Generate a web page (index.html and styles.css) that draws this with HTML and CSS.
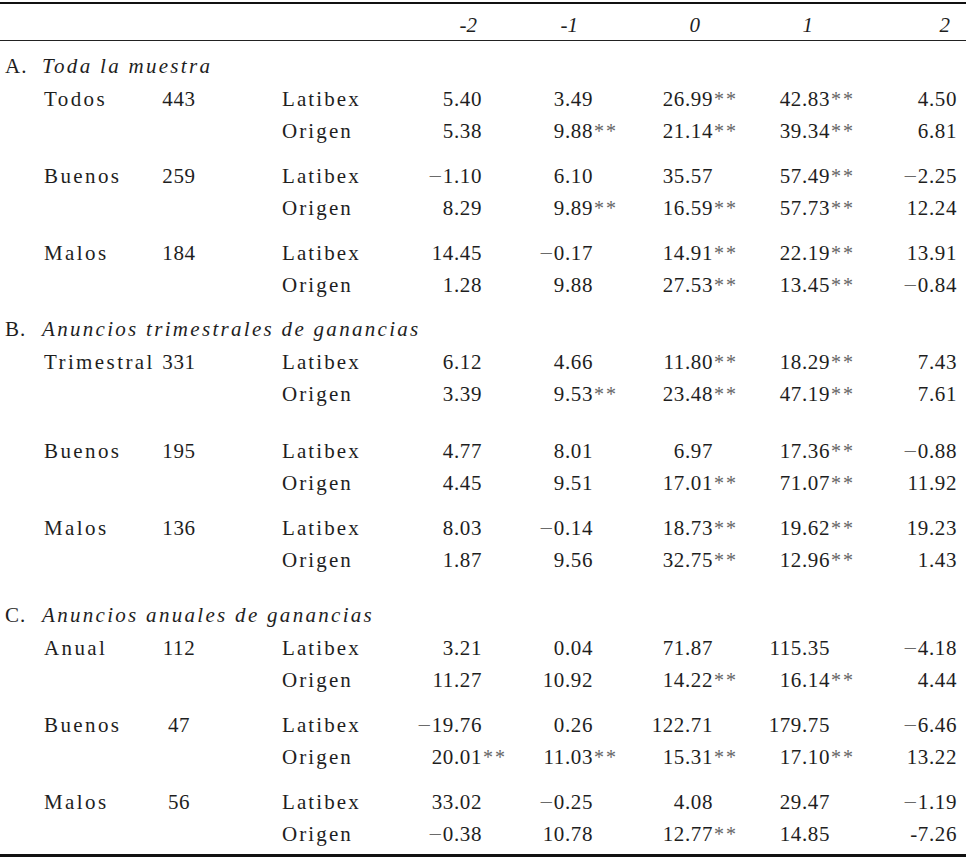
FILE: index.html
```html
<!DOCTYPE html>
<html lang="es">
<head>
<meta charset="utf-8">
<title>Tabla</title>
<link rel="stylesheet" href="styles.css">
</head>
<body>
<table class="tbl">
  <colgroup>
    <col class="w-grp"><col class="w-n"><col class="w-typ">
    <col class="w-c1"><col class="w-c2"><col class="w-c3"><col class="w-c4"><col class="w-c5">
  </colgroup>
  <thead>
    <tr class="head">
      <th></th><th></th><th></th>
      <th class="h h1">-2</th><th class="h h2">-1</th><th class="h h3">0</th><th class="h h4">1</th><th class="h h5">2</th>
    </tr>
  </thead>
  <tbody>
    <tr class="sec sec-a"><td colspan="8"><span class="let">A.</span><em class="ttl">Toda la muestra</em></td></tr>
    <tr class="r1"><td class="g">Todos</td><td class="n">443</td><td class="t">Latibex</td><td class="v">5.40</td><td class="v">3.49</td><td class="v">26.99<span class="s">**</span></td><td class="v">42.83<span class="s">**</span></td><td class="v last">4.50</td></tr>
    <tr><td></td><td></td><td class="t">Origen</td><td class="v">5.38</td><td class="v">9.88<span class="s">**</span></td><td class="v">21.14<span class="s">**</span></td><td class="v">39.34<span class="s">**</span></td><td class="v last">6.81</td></tr>
    <tr class="grp"><td class="g">Buenos</td><td class="n">259</td><td class="t">Latibex</td><td class="v"><span class="m">–</span>1.10</td><td class="v">6.10</td><td class="v">35.57</td><td class="v">57.49<span class="s">**</span></td><td class="v last"><span class="m">–</span>2.25</td></tr>
    <tr><td></td><td></td><td class="t">Origen</td><td class="v">8.29</td><td class="v">9.89<span class="s">**</span></td><td class="v">16.59<span class="s">**</span></td><td class="v">57.73<span class="s">**</span></td><td class="v last">12.24</td></tr>
    <tr class="grp"><td class="g">Malos</td><td class="n">184</td><td class="t">Latibex</td><td class="v">14.45</td><td class="v"><span class="m">–</span>0.17</td><td class="v">14.91<span class="s">**</span></td><td class="v">22.19<span class="s">**</span></td><td class="v last">13.91</td></tr>
    <tr><td></td><td></td><td class="t">Origen</td><td class="v">1.28</td><td class="v">9.88</td><td class="v">27.53<span class="s">**</span></td><td class="v">13.45<span class="s">**</span></td><td class="v last"><span class="m">–</span>0.84</td></tr>

    <tr class="sec sec-b"><td colspan="8"><span class="let">B.</span><em class="ttl">Anuncios trimestrales de ganancias</em></td></tr>
    <tr class="r1"><td class="g">Trimestral</td><td class="n">331</td><td class="t">Latibex</td><td class="v">6.12</td><td class="v">4.66</td><td class="v">11.80<span class="s">**</span></td><td class="v">18.29<span class="s">**</span></td><td class="v last">7.43</td></tr>
    <tr><td></td><td></td><td class="t">Origen</td><td class="v">3.39</td><td class="v">9.53<span class="s">**</span></td><td class="v">23.48<span class="s">**</span></td><td class="v">47.19<span class="s">**</span></td><td class="v last">7.61</td></tr>
    <tr class="grp grp-wide"><td class="g">Buenos</td><td class="n">195</td><td class="t">Latibex</td><td class="v">4.77</td><td class="v">8.01</td><td class="v">6.97</td><td class="v">17.36<span class="s">**</span></td><td class="v last"><span class="m">–</span>0.88</td></tr>
    <tr><td></td><td></td><td class="t">Origen</td><td class="v">4.45</td><td class="v">9.51</td><td class="v">17.01<span class="s">**</span></td><td class="v">71.07<span class="s">**</span></td><td class="v last">11.92</td></tr>
    <tr class="grp"><td class="g">Malos</td><td class="n">136</td><td class="t">Latibex</td><td class="v">8.03</td><td class="v"><span class="m">–</span>0.14</td><td class="v">18.73<span class="s">**</span></td><td class="v">19.62<span class="s">**</span></td><td class="v last">19.23</td></tr>
    <tr><td></td><td></td><td class="t">Origen</td><td class="v">1.87</td><td class="v">9.56</td><td class="v">32.75<span class="s">**</span></td><td class="v">12.96<span class="s">**</span></td><td class="v last">1.43</td></tr>

    <tr class="sec sec-c"><td colspan="8"><span class="let">C.</span><em class="ttl">Anuncios anuales de ganancias</em></td></tr>
    <tr class="r1"><td class="g">Anual</td><td class="n">112</td><td class="t">Latibex</td><td class="v">3.21</td><td class="v">0.04</td><td class="v">71.87</td><td class="v">115.35</td><td class="v last"><span class="m">–</span>4.18</td></tr>
    <tr><td></td><td></td><td class="t">Origen</td><td class="v">11.27</td><td class="v">10.92</td><td class="v">14.22<span class="s">**</span></td><td class="v">16.14<span class="s">**</span></td><td class="v last">4.44</td></tr>
    <tr class="grp"><td class="g">Buenos</td><td class="n">47</td><td class="t">Latibex</td><td class="v"><span class="m">–</span>19.76</td><td class="v">0.26</td><td class="v">122.71</td><td class="v">179.75</td><td class="v last"><span class="m">–</span>6.46</td></tr>
    <tr><td></td><td></td><td class="t">Origen</td><td class="v">20.01<span class="s">**</span></td><td class="v">11.03<span class="s">**</span></td><td class="v">15.31<span class="s">**</span></td><td class="v">17.10<span class="s">**</span></td><td class="v last">13.22</td></tr>
    <tr class="grp"><td class="g">Malos</td><td class="n">56</td><td class="t">Latibex</td><td class="v">33.02</td><td class="v"><span class="m">–</span>0.25</td><td class="v">4.08</td><td class="v">29.47</td><td class="v last"><span class="m">–</span>1.19</td></tr>
    <tr class="end"><td></td><td></td><td class="t">Origen</td><td class="v"><span class="m">–</span>0.38</td><td class="v">10.78</td><td class="v">12.77<span class="s">**</span></td><td class="v">14.85</td><td class="v last">-7.26</td></tr>
  </tbody>
</table>
</body>
</html>
```

FILE: styles.css
```css
html, body {
  margin: 0;
  padding: 0;
  background: #ffffff;
}

body {
  padding-top: 2px;
  color: #1e1e1e;
  font-family: "Liberation Serif", "Times New Roman", serif;
  font-size: 21px;
}

.tbl {
  width: 966px;
  border-collapse: separate;
  border-spacing: 0;
  table-layout: fixed;
  border-top: 2px solid #111;
  border-bottom: 3px solid #111;
}

.w-grp { width: 140px; }
.w-n { width: 78px; }
.w-typ { width: 182px; }
.w-c1 { width: 105px; }
.w-c2 { width: 111px; }
.w-c3 { width: 120px; }
.w-c4 { width: 117px; }
.w-c5 { width: 113px; }

.tbl td,
.tbl th {
  padding: 0;
  height: 32px;
  line-height: 32px;
  white-space: nowrap;
  vertical-align: top;
}

.head th {
  height: 30px;
  line-height: 30px;
  padding-top: 6px;
  padding-bottom: 0;
  border-bottom: 1px solid #222;
  font-weight: normal;
  font-style: italic;
  text-align: right;
}

.head .h1 { padding-right: 28px; }
.head .h2 { padding-right: 38px; }
.head .h3 { padding-right: 36px; }
.head .h4 { padding-right: 40px; }
.head .h5 { padding-right: 16px; }

.sec td {
  padding-left: 5px;
}
.sec-a td { padding-top: 9px; }
.sec-b td { padding-top: 12px; }
.sec-c td { padding-top: 23px; }

.r1 td { padding-top: 1px; }

.let {
  display: inline-block;
  width: 37px;
  letter-spacing: 1px;
}

.ttl {
  letter-spacing: 2.3px;
}

.grp td { padding-top: 13px; }
.grp-wide td { padding-top: 25px; }
.end td { padding-bottom: 4px; }

.tbl .g {
  padding-left: 44px;
  letter-spacing: 2.4px;
  overflow: visible;
}

.n {
  text-align: center;
  letter-spacing: 0.6px;
}

.tbl .t {
  padding-left: 64px;
  letter-spacing: 2.1px;
}

.tbl .v {
  text-align: right;
  padding-right: 23px;
  letter-spacing: 0.6px;
}

.tbl .v.last {
  padding-right: 9px;
}

.m {
  display: inline-block;
  position: relative;
  top: -1px;
  color: #6a6a6a;
  font-size: 22px;
  letter-spacing: 2px;
}

.s {
  display: inline-block;
  width: 0;
  overflow: visible;
  font-size: 20px;
  line-height: 1;
  letter-spacing: 2px;
  color: #666;
  vertical-align: 0;
  text-indent: 1px;
}
```
